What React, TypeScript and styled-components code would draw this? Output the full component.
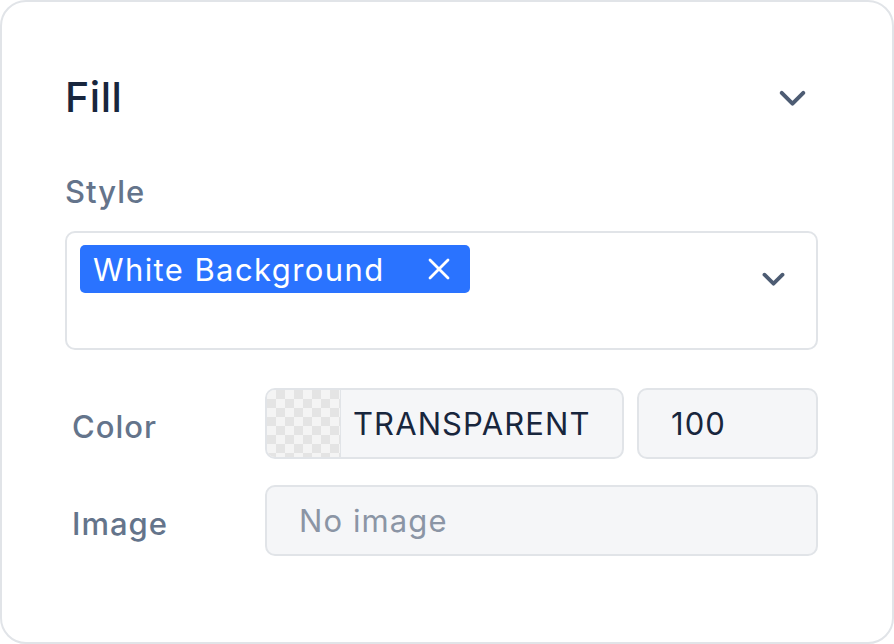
import React from "react";
import styled, { createGlobalStyle } from "styled-components";

const GlobalStyle = createGlobalStyle`
  * { box-sizing: border-box; }
  html, body { margin: 0; padding: 0; background: #ffffff; }
  body { font-family: Inter, "Noto Sans", "Liberation Sans", sans-serif; }
`;

const Card = styled.section`
  width: 894px;
  height: 644px;
  border: 2px solid #e1e4e8;
  border-radius: 26px;
  background: #ffffff;
  padding: 71px 74px 0 63px;
  display: flex;
  flex-direction: column;
`;

const Header = styled.div`
  display: flex;
  align-items: center;
  justify-content: space-between;
  height: 48px;
`;

const Title = styled.h2`
  margin: 0;
  font-size: 41px;
  font-weight: 500;
  color: #18263d;
  letter-spacing: 0.6px;
`;

const IconButton = styled.button`
  border: 0;
  background: none;
  padding: 0;
  display: flex;
  color: #4d5c73;
  margin-right: 7px;
`;

const SectionLabel = styled.div`
  margin-top: 54px;
  font-size: 31px;
  line-height: 34px;
  font-weight: 500;
  color: #64748b;
  letter-spacing: 1px;
`;

const Select = styled.div`
  margin-top: 22px;
  height: 119px;
  border: 2px solid #e1e4e8;
  border-radius: 10px;
  padding: 12px 27px 0 13px;
  display: flex;
  align-items: flex-start;
  justify-content: space-between;
`;

const Tag = styled.span`
  display: inline-flex;
  align-items: center;
  height: 48px;
  padding: 0 19px 0 13px;
  border-radius: 5px;
  background: #2a73ff;
  color: #ffffff;
  font-size: 31px;
  font-weight: 400;
  letter-spacing: 1.4px;
`;

const TagRemove = styled.span`
  display: flex;
  margin-left: 42px;
`;

const SelectChevron = styled.span`
  display: flex;
  margin-top: 18px;
  color: #4d5c73;
`;

const FieldGrid = styled.div`
  margin-top: 38px;
  display: grid;
  grid-template-columns: 200px 1fr;
  row-gap: 26px;
  align-items: center;
`;

const FieldLabel = styled.div`
  padding: 6px 0 0 7px;
  font-size: 31px;
  font-weight: 500;
  color: #64748b;
  letter-spacing: 1px;
`;

const FieldRow = styled.div`
  display: flex;
  gap: 13px;
`;

const Input = styled.div<{ $grow?: boolean; $muted?: boolean }>`
  flex: ${(p) => (p.$grow ? "1 1 auto" : "0 0 181px")};
  height: 71px;
  border: 2px solid #e1e4e8;
  border-radius: 10px;
  background: #f5f6f8;
  display: flex;
  align-items: center;
  padding-left: 32px;
  overflow: hidden;
  font-size: 31px;
  color: ${(p) => (p.$muted ? "#8b95a5" : "#18263d")};
  letter-spacing: 1.1px;
`;

const ColorInput = styled(Input)`
  padding-left: 0;
`;

const Swatch = styled.span`
  width: 74px;
  height: 100%;
  flex: 0 0 auto;
  border-right: 1px solid #e1e4e8;
  background-color: #f4f4f4;
  background-image:
    linear-gradient(45deg, #e4e4e4 25%, transparent 25%, transparent 75%, #e4e4e4 75%),
    linear-gradient(45deg, #e4e4e4 25%, transparent 25%, transparent 75%, #e4e4e4 75%);
  background-size: 18px 18px;
  background-position: 0 0, 9px 9px;
`;

const ColorValue = styled.span`
  padding-left: 12px;
`;

const Chevron = ({ size, stroke }: { size: number; stroke: number }) => (
  <svg width={size} height={size} viewBox="0 0 24 24" fill="none" stroke="currentColor" strokeWidth={stroke} strokeLinecap="round" strokeLinejoin="round">
    <path d="M5 9l7 7 7-7" />
  </svg>
);

export default function App() {
  return (
    <>
      <GlobalStyle />
      <Card>
        <Header>
          <Title>Fill</Title>
          <IconButton aria-label="Collapse">
            <Chevron size={37} stroke={2.6} />
          </IconButton>
        </Header>

        <SectionLabel>Style</SectionLabel>
        <Select>
          <Tag>
            White Background
            <TagRemove>
              <svg width="24" height="24" viewBox="0 0 24 24" fill="none" stroke="currentColor" strokeWidth="2.8" strokeLinecap="round">
                <path d="M3 3l18 18M21 3L3 21" />
              </svg>
            </TagRemove>
          </Tag>
          <SelectChevron>
            <Chevron size={31} stroke={2.9} />
          </SelectChevron>
        </Select>

        <FieldGrid>
          <FieldLabel>Color</FieldLabel>
          <FieldRow>
            <ColorInput $grow>
              <Swatch />
              <ColorValue>TRANSPARENT</ColorValue>
            </ColorInput>
            <Input>100</Input>
          </FieldRow>

          <FieldLabel>Image</FieldLabel>
          <FieldRow>
            <Input $grow $muted>No image</Input>
          </FieldRow>
        </FieldGrid>
      </Card>
    </>
  );
}
